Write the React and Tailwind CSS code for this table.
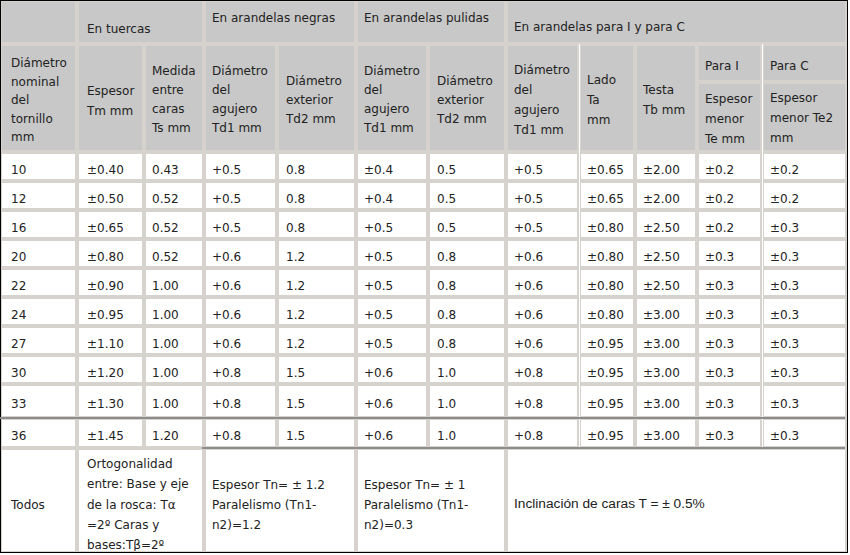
import React from "react";

const rows = [
  ["10", "±0.40", "0.43", "+0.5", "0.8", "±0.4", "0.5", "+0.5", "±0.65", "±2.00", "±0.2", "±0.2"],
  ["12", "±0.50", "0.52", "+0.5", "0.8", "+0.4", "0.5", "+0.5", "±0.65", "±2.00", "±0.2", "±0.2"],
  ["16", "±0.65", "0.52", "+0.5", "0.8", "+0.5", "0.5", "+0.5", "±0.80", "±2.50", "±0.2", "±0.3"],
  ["20", "±0.80", "0.52", "+0.6", "1.2", "+0.5", "0.8", "+0.6", "±0.80", "±2.50", "±0.3", "±0.3"],
  ["22", "±0.90", "1.00", "+0.6", "1.2", "+0.5", "0.8", "+0.6", "±0.80", "±2.50", "±0.3", "±0.3"],
  ["24", "±0.95", "1.00", "+0.6", "1.2", "+0.5", "0.8", "+0.6", "±0.80", "±3.00", "±0.3", "±0.3"],
  ["27", "±1.10", "1.00", "+0.6", "1.2", "+0.5", "0.8", "+0.6", "±0.95", "±3.00", "±0.3", "±0.3"],
  ["30", "±1.20", "1.00", "+0.8", "1.5", "+0.6", "1.0", "+0.8", "±0.95", "±3.00", "±0.3", "±0.3"],
  ["33", "±1.30", "1.00", "+0.8", "1.5", "+0.6", "1.0", "+0.8", "±0.95", "±3.00", "±0.3", "±0.3"],
  ["36", "±1.45", "1.20", "+0.8", "1.5", "+0.6", "1.0", "+0.8", "±0.95", "±3.00", "±0.3", "±0.3"],
];

// left padding per column, measured off the screenshot
const pads = [
  "pl-[9px]",
  "pl-[8px]",
  "pl-[6px]",
  "pl-[6px]",
  "pl-[7px]",
  "pl-[6px]",
  "pl-[7px]",
  "pl-[6px]",
  "pl-[6px]",
  "pl-[6px]",
  "pl-[6px]",
  "pl-[6px]",
];

const line =
  "relative before:absolute before:top-[-3px] before:h-[2px] before:right-0 before:bg-[#8c8c8c]";

// thin white rule that runs down the gap after "Td1" and "Para I"
const rule =
  " relative after:absolute after:right-[-3px] after:top-[-2px] after:bottom-[-2px] after:w-px after:bg-white";

function Head({ className = "", children }) {
  return (
    <div className={"bg-[#c8c8c8] flex pr-1 whitespace-nowrap " + className}>
      <div>{children}</div>
    </div>
  );
}

function Cell({ className = "", children }) {
  return (
    <div className={"bg-white flex items-center pt-[6px] whitespace-nowrap " + className}>
      {children}
    </div>
  );
}

export default function App() {
  return (
    <div className="bg-white min-h-[555px]">
      <div className="w-[848px] border border-black bg-[#d6d3ce] p-[1px] font-['DejaVu_Sans',sans-serif] text-[12px] leading-[20px] text-[#222]">
        <div className="grid grid-cols-[73px_63px_56px_69px_75px_68px_74px_69px_52px_58px_61px_81px] grid-rows-[40px_34px_66px_repeat(8,25px)_30px_26px_101px] gap-[4px]">
          {/* first header row */}
          <Head />
          <Head className="col-span-2 items-end pb-[3px] pl-[8px]">En tuercas</Head>
          <Head className="col-span-2 items-start pt-[6px] pl-[6px]">En arandelas negras</Head>
          <Head className="col-span-2 items-start pt-[6px] pl-[6px]">En arandelas pulidas</Head>
          <Head className="col-span-5 items-start pt-[15px] pl-[6px]">En arandelas para I y para C</Head>

          {/* second header row */}
          <Head className="row-span-2 items-start pt-[8px] pl-[9px] leading-[18.5px]">
            Diámetro<br />nominal<br />del<br />tornillo<br />mm
          </Head>
          <Head className="row-span-2 items-center pt-[6px] pl-[8px]">
            Espesor<br />Tm mm
          </Head>
          <Head className="row-span-2 items-center pt-[4px] pl-[6px] leading-[19px]">
            Medida<br />entre<br />caras<br />Ts mm
          </Head>
          <Head className="row-span-2 items-center pt-[4px] pl-[6px] leading-[19px]">
            Diámetro<br />del<br />agujero<br />Td1 mm
          </Head>
          <Head className="row-span-2 items-center pt-[4px] pl-[7px] leading-[19px]">
            Diámetro<br />exterior<br />Td2 mm
          </Head>
          <Head className="row-span-2 items-center pt-[4px] pl-[6px] leading-[19px]">
            Diámetro<br />del<br />agujero<br />Td1 mm
          </Head>
          <Head className="row-span-2 items-center pt-[4px] pl-[7px] leading-[19px]">
            Diámetro<br />exterior<br />Td2 mm
          </Head>
          <Head className={"row-span-2 items-center pt-[4px] pl-[6px]" + rule}>
            Diámetro<br />del<br />agujero<br />Td1 mm
          </Head>
          <Head className="row-span-2 items-center pt-[4px] pl-[6px]">
            Lado<br />Ta<br />mm
          </Head>
          <Head className="row-span-2 items-center pt-[4px] pl-[6px]">
            Testa<br />Tb mm
          </Head>
          <Head className={"items-center pt-[6px] pl-[6px]" + rule}>Para I</Head>
          <Head className="items-center pt-[6px] pl-[6px]">Para C</Head>
          <Head className={"items-center pt-[4px] pl-[6px]" + rule}>
            Espesor<br />menor<br />Te mm
          </Head>
          <Head className="items-center pt-[2px] pl-[6px]">
            Espesor<br />menor Te2<br />mm
          </Head>

          {/* data rows */}
          {rows.map((row, r) =>
            row.map((v, c) => (
              <Cell
                key={r + "-" + c}
                className={
                  pads[c] +
                  (c === 7 || c === 10 ? rule : "") +
                  (r === 9
                    ? " " + line + (c === 0 ? " before:left-[-2px]" : " before:left-[-4px]")
                    : "")
                }
              >
                {v}
              </Cell>
            ))
          )}

          {/* last row */}
          <Cell className="pl-[9px] pt-[8px]">Todos</Cell>
          <div className={"bg-white col-span-2 pl-[8px] pt-[4px] leading-[20.3px] overflow-hidden whitespace-nowrap " + line + " before:left-[-2px]"}>
            Ortogonalidad<br />entre: Base y eje<br />de la rosca: Tα<br />=2º Caras y<br />bases:Tβ=2º
          </div>
          <Cell className={"col-span-2 pl-[6px] pt-[9px] leading-[20.3px] " + line + " before:left-[-4px]"}>
            <div>
              Espesor Tn= ± 1.2<br />Paralelismo (Tn1-<br />n2)=1.2
            </div>
          </Cell>
          <Cell className={"col-span-2 pl-[6px] pt-[9px] leading-[20.3px] " + line + " before:left-[-4px]"}>
            <div>
              Espesor Tn= ± 1<br />Paralelismo (Tn1-<br />n2)=0.3
            </div>
          </Cell>
          <Cell className={"col-span-5 pl-[6px] pt-[7px] font-['Liberation_Sans',sans-serif] text-[13.7px] " + line + " before:left-[-4px]"}>
            Inclinación de caras T = ± 0.5%
          </Cell>
        </div>
      </div>
    </div>
  );
}
